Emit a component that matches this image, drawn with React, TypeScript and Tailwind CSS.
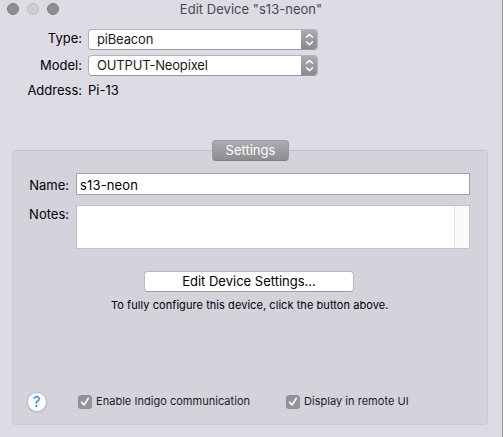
import React from "react";

interface SelectFieldProps {
  value: string;
}

const SelectField: React.FC<SelectFieldProps> = ({ value }) => (
  <div className="flex h-[21px] w-[230px] overflow-hidden rounded-[4px] border border-[#b3b2b9] border-b-[#98979f] bg-white">
    <span className="flex-1 pl-2 leading-[19px] tracking-[-0.17px] text-[#1a1a1a]">{value}</span>
    <span className="-my-px -mr-px flex w-[17px] items-center justify-center bg-linear-to-b from-[#adacb0] to-[#89888c]">
      <svg width="9" height="13" viewBox="0 0 9 13" fill="none" stroke="white" strokeWidth="1.4" strokeLinecap="round" strokeLinejoin="round">
        <path d="M1.5 4.3 4.5 1.3l3 3M1.5 8.7l3 3 3-3" />
      </svg>
    </span>
  </div>
);

interface CheckFieldProps {
  label: string;
}

const CheckField: React.FC<CheckFieldProps> = ({ label }) => (
  <div className="flex h-[14px] items-center whitespace-nowrap text-[11px] text-[#1c1c1e]">
    <span className="mr-[4px] flex size-[14px] items-center justify-center rounded-[3px] border border-[#8c8b8f] bg-[#949397]">
      <svg width="10" height="10" viewBox="0 0 10 10" fill="none" stroke="white" strokeWidth="1.6" strokeLinecap="round" strokeLinejoin="round">
        <path d="M1.6 5.4 4 8l4.3-6.6" />
      </svg>
    </span>
    <span className="-mt-[2px] tracking-[0.03px]">{label}</span>
  </div>
);

export default function App() {
  return (
    <div className="h-[437px] w-[503px] overflow-hidden border-r border-[#9b9a9e] bg-[#dddbe4] font-['Inter','Liberation_Sans',sans-serif] text-[13px] text-black">
      {/* Title bar */}
      <div className="grid h-[29px] grid-cols-[60px_1fr_60px] items-start">
        <div className="flex gap-2 pt-[3px] pl-[7px]">
          <span className="size-3 rounded-full border border-[#7d7c81] bg-[#8e8d92]" />
          <span className="size-3 rounded-full border border-[#bebdc0] bg-[#cfcecf]" />
          <span className="size-3 rounded-full border border-[#7d7c81] bg-[#8e8d92]" />
        </div>
        <h1 className="text-center leading-[18px] tracking-[0.03px] text-[#49484c]">Edit Device "s13-neon"</h1>
      </div>

      {/* Device identity */}
      <div className="grid grid-cols-[82px_230px] gap-x-[6px] gap-y-[5px] leading-[21px]">
        <span className="-mt-px text-right">Type:</span>
        <SelectField value="piBeacon" />
        <span className="text-right">Model:</span>
        <SelectField value="OUTPUT-Neopixel" />
        <span className="-mt-px h-[21px] text-right">Address:</span>
        <span className="-mt-px h-[21px]">Pi-13</span>
      </div>

      {/* Settings tab */}
      <div className="mt-[39px] ml-[212px] flex h-[21px]">
        <span className="z-10 h-[21px] w-[77px] rounded-[4px] border border-[#9a999d] border-b-[#7f7e82] bg-linear-to-b from-[#adacb0] to-[#8d8c90] text-center leading-[19px] text-white">
          Settings
        </span>
      </div>
      <div className="-mt-[11px] ml-3 h-[275px] w-[476px] rounded-[4px] border border-[#cbc9d1] border-t-[#c3c1c9] bg-[#d4d2db] pt-[22px]">
        <div className="grid grid-cols-[56px_394px] gap-x-[7px] gap-y-[10px]">
          <label htmlFor="name" className="h-[22px] text-right leading-[24px]">Name:</label>
          <input
            id="name"
            defaultValue="s13-neon"
            className="h-[22px] w-full border border-[#a3a2ac] bg-white px-[3px] pt-[2px] tracking-[0.15px] outline-none"
          />
          <label htmlFor="notes" className="text-right leading-[19px]">Notes:</label>
          <div className="flex h-[44px] border border-[#c1c0c3] bg-white">
            <textarea id="notes" className="h-full flex-1 resize-none outline-none" />
            <div className="w-[15px] border-l border-[#e6e6e6] bg-[#fafafa]" />
          </div>
        </div>

        <button className="mt-[22px] ml-[131px] block h-[21px] w-[210px] rounded-[4px] border border-[#b9b8bf] border-b-[#9d9ca4] bg-white leading-[19px]">
          Edit Device Settings...
        </button>
        <p className="mt-[5px] ml-[98px] text-[11px] leading-[16px] tracking-[0.06px] whitespace-nowrap">
          To fully configure this device, click the button above.
        </p>

        <div className="mt-[79px] flex h-5 items-center">
          <button className="ml-[13.5px] size-5 rounded-full border border-[#c0bfc4] bg-white text-[15px] leading-[18px] text-[#2f7bf6] shadow-[0_0.5px_1px_rgba(0,0,0,0.2)]">
            ?
          </button>
          <div className="ml-[31.5px] w-[208px]">
            <CheckField label="Enable Indigo communication" />
          </div>
          <CheckField label="Display in remote UI" />
        </div>
      </div>
    </div>
  );
}
